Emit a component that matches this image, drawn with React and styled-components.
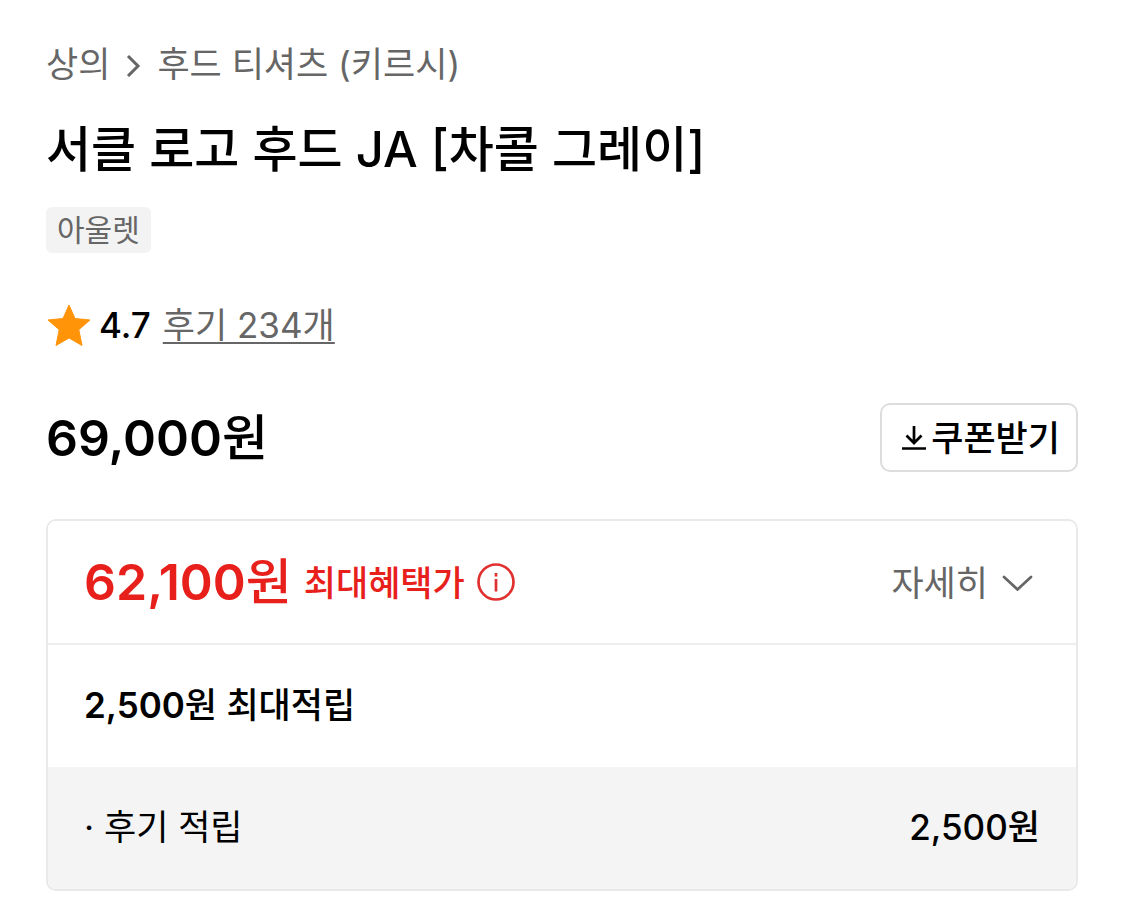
import React from 'react';
import styled, { createGlobalStyle } from 'styled-components';

const Global = createGlobalStyle`
  * { box-sizing: border-box; }
  body { margin: 0; background: #fff; color: #000; font-family: Inter, "Noto Sans CJK KR", sans-serif; }
  h1 { margin: 0; }
  svg { display: block; flex: none; }
`;
const Page = styled.main`
  padding: 40px 47px 20px 46px;
`;
const Breadcrumb = styled.nav`
  display: flex;
  align-items: center;
  gap: 14px;
  font-size: 35px;
  line-height: 48px;
`;
const Crumb = styled.a`
  color: #666;
  text-decoration: none;
`;
const Title = styled.h1`
  margin-top: 30px;
  font-size: 49px;
  line-height: 64px;
  font-weight: 500;
`;
const Tag = styled.span`
  display: block;
  width: fit-content;
  margin-top: 25px;
  padding: 0 11px;
  border-radius: 6px;
  background: #f3f3f3;
  color: #666;
  font-size: 30px;
  line-height: 46px;
`;
const Rating = styled.div`
  display: flex;
  align-items: center;
  margin-top: 49px;
  font-size: 35px;
  line-height: 46px;
`;
const Score = styled.span`
  margin: 0 12px 0 8px;
  font-weight: 500;
`;
const Reviews = styled.a`
  color: #666;
  text-decoration: underline;
  text-decoration-thickness: 2px;
  text-underline-offset: 4px;
`;
const PriceRow = styled.div`
  display: flex;
  align-items: center;
  justify-content: space-between;
  margin-top: 55px;
`;
const Price = styled.strong`
  font-size: 50px;
  line-height: 64px;
  font-weight: 600;
`;
const Unit = styled.span`
  font-weight: 500;
`;
const CouponButton = styled.button`
  display: flex;
  align-items: center;
  gap: 4px;
  height: 69px;
  padding: 0 16px 4px 19px;
  border: 2px solid #ddd;
  border-radius: 10px;
  background: #fff;
  color: #000;
  font-family: inherit;
  font-size: 35px;
  font-weight: 500;
  cursor: pointer;
`;
const Card = styled.section`
  margin-top: 47px;
  border: 2px solid #e9e9e9;
  border-radius: 10px;
  overflow: hidden;
`;
const Row = styled.div`
  display: flex;
  align-items: center;
  justify-content: space-between;
  min-height: 122px;
  padding: 0 36px 8px;
  background: ${p => (p.$shaded ? '#f4f4f4' : '#fff')};
  font-size: 35px;
`;
const BenefitRow = styled(Row)`
  min-height: 124px;
  padding-bottom: 0;
  border-bottom: 2px solid #eee;
`;
const Benefit = styled.div`
  display: flex;
  align-items: center;
  color: #e8201c;
`;
const BenefitLabel = styled.span`
  margin: 0 12px;
  padding-bottom: 4px;
  font-weight: 500;
`;
const DetailButton = styled.button`
  display: flex;
  align-items: center;
  gap: 13px;
  padding: 0 7px 4px 0;
  border: 0;
  background: none;
  color: #666;
  font-family: inherit;
  font-size: 35px;
  cursor: pointer;
`;
const Saving = styled.span`
  font-weight: 500;
`;
const Amount = styled.span`
  font-weight: ${p => (p.$strong ? 600 : 500)};
`;

export default function App() {
  return (
    <>
      <Global />
      <Page>
        <Breadcrumb aria-label="breadcrumb">
          <Crumb href="#tops">상의</Crumb>
          <svg width="19" height="26" viewBox="0 0 19 26" fill="none" stroke="#666" strokeWidth="3"><path d="M4 5l10 10-10 10" /></svg>
          <Crumb href="#hoodies">후드 티셔츠 (키르시)</Crumb>
        </Breadcrumb>
        <Title>서클 로고 후드 JA [차콜 그레이]</Title>
        <Tag>아울렛</Tag>
        <Rating>
          <svg width="45" height="44" viewBox="0 0 45 44" fill="#ff9408" stroke="#ff9408" strokeLinejoin="round"><path d="M23 2l6 13.500 15 1.500-11.200 9.700 3.200 15.800-13-7.500-13 7.500 3.200-15.800L2 17l15-1.500z" /></svg>
          <Score>4.7</Score>
          <Reviews href="#reviews">후기 234개</Reviews>
        </Rating>
        <PriceRow>
          <Price>69,000<Unit>원</Unit></Price>
          <CouponButton type="button">
            <svg width="26" height="28" viewBox="0 0 26 28" fill="none" stroke="#000" strokeWidth="2.700"><path d="M13 4v17M5.500 13.500L13 21l7.500-7.500M1 26.500h24" /></svg>
            쿠폰받기
          </CouponButton>
        </PriceRow>
        <Card>
          <BenefitRow>
            <Benefit>
              <Price>62,100<Unit>원</Unit></Price>
              <BenefitLabel>최대혜택가</BenefitLabel>
              <svg width="38" height="38" viewBox="0 0 38 38" fill="none" stroke="#e03030" strokeWidth="2.700"><circle cx="19" cy="19" r="17.500" /><path d="M19 16v12.500M19 10v3.500" /></svg>
            </Benefit>
            <DetailButton type="button">
              자세히
              <svg width="32" height="22" viewBox="0 0 32 22" fill="none" stroke="#666" strokeWidth="2.700" strokeLinecap="round"><path d="M3 8l13.500 12.500L30 8" /></svg>
            </DetailButton>
          </BenefitRow>
          <Row>
            <Saving><Amount $strong>2,500<Unit>원</Unit></Amount> 최대적립</Saving>
          </Row>
          <Row $shaded>
            <span>· 후기 적립</span>
            <Amount>2,500원</Amount>
          </Row>
        </Card>
      </Page>
    </>
  );
}
